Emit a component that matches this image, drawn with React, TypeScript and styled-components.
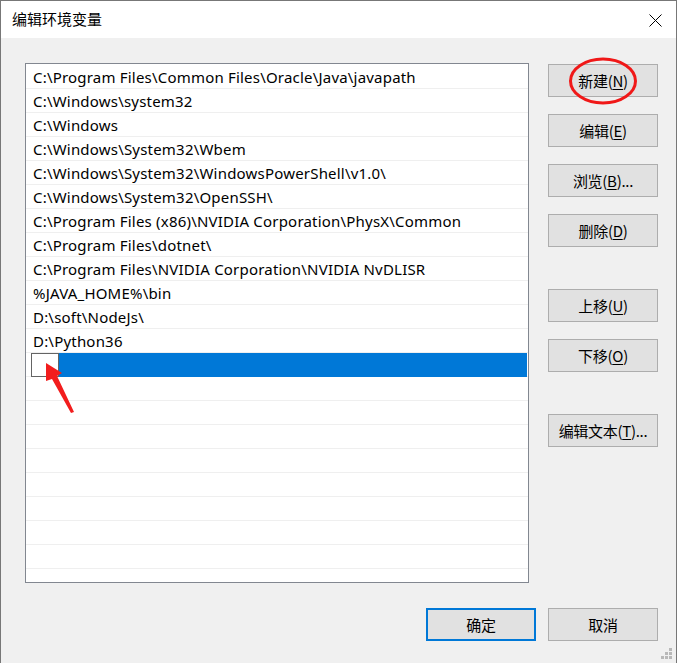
import React from "react";
import styled, { createGlobalStyle } from "styled-components";

const Global = createGlobalStyle`
  html, body { margin: 0; padding: 0; background: #ffffff; }
  body { font-family: "Noto Sans", "Noto Sans CJK SC", sans-serif; }
`;

const UI = `"Noto Sans", "Noto Sans CJK SC", sans-serif`;

const Window = styled.div`
  position: relative;
  width: 677px;
  height: 663px;
  box-sizing: border-box;
  border-left: 1px solid #777777;
  border-top: 1px solid #777777;
  border-right: 1px solid #777777;
  background: #f0f0f0;
  display: flex;
  flex-direction: column;
  overflow: hidden;
  font-family: ${UI};
  color: #000;
`;

const TitleBar = styled.div`
  height: 37px;
  background: #ffffff;
  display: flex;
  align-items: center;
  justify-content: space-between;
  padding: 0 14px 0 11px;
  flex-shrink: 0;
`;

const Title = styled.div`
  font-family: "Noto Sans CJK SC", sans-serif;
  font-size: 15px;
  line-height: 20px;
  margin-top: -1px;
`;

const CloseIcon = styled.svg`
  width: 13px;
  height: 13px;
  margin-top: 1px;
`;

const Body = styled.div`
  flex: 1;
  display: flex;
  flex-direction: column;
  padding: 25px 18px 0 24px;
`;

const Main = styled.div`
  display: flex;
  gap: 19px;
`;

const ListBox = styled.div`
  width: 504px;
  height: 520px;
  box-sizing: border-box;
  border: 1px solid #828790;
  background: #ffffff;
  padding-top: 1px;
  overflow: hidden;
`;

const Row = styled.div<{ $selected?: boolean }>`
  height: 23px;
  border-bottom: 1px solid #efefef;
  display: flex;
  align-items: center;
  padding-left: ${(p) => (p.$selected ? "5px" : "7px")};
  padding-right: 1px;
  white-space: nowrap;
`;

const RowText = styled.span`
  font-family: ${UI};
  font-size: 15px;
  letter-spacing: 0.2px;
`;

const EditBox = styled.div`
  width: 28px;
  height: 24px;
  box-sizing: border-box;
  border: 1px solid #646464;
  background: #fff;
  margin-top: 1px;
  flex-shrink: 0;
`;

const Highlight = styled.div`
  flex: 1;
  height: 24px;
  margin-top: 1px;
  background: #0078d7;
`;

const ButtonColumn = styled.div`
  display: flex;
  flex-direction: column;
  padding-top: 1px;
  width: 110px;
`;

const ButtonGroup = styled.div<{ $gapAfter?: number }>`
  display: flex;
  flex-direction: column;
  gap: 17px;
  margin-bottom: ${(p) => p.$gapAfter ?? 0}px;
`;

const Button = styled.div<{ $default?: boolean }>`
  width: 110px;
  height: 33px;
  box-sizing: border-box;
  background: #e1e1e1;
  border: ${(p) => (p.$default ? "2px solid #0078d7" : "1px solid #adadad")};
  display: flex;
  align-items: center;
  justify-content: center;
  white-space: nowrap;
`;

const Label = styled.span`
  font-family: "Noto Sans CJK SC", sans-serif;
  font-size: 15px;
  letter-spacing: -0.3px;
`;

const Key = styled.span`
  text-decoration: underline;
  text-underline-offset: 2px;
`;

const Footer = styled.div`
  display: flex;
  justify-content: flex-end;
  gap: 12px;
  margin-top: 25px;
`;

const Grip = styled.svg`
  position: absolute;
  right: 3px;
  bottom: 3px;
  width: 12px;
  height: 12px;
`;

const Annotations = styled.svg`
  position: absolute;
  left: 0;
  top: 0;
  width: 677px;
  height: 663px;
  pointer-events: none;
`;

const paths = [
  "C:\\Program Files\\Common Files\\Oracle\\Java\\javapath",
  "C:\\Windows\\system32",
  "C:\\Windows",
  "C:\\Windows\\System32\\Wbem",
  "C:\\Windows\\System32\\WindowsPowerShell\\v1.0\\",
  "C:\\Windows\\System32\\OpenSSH\\",
  "C:\\Program Files (x86)\\NVIDIA Corporation\\PhysX\\Common",
  "C:\\Program Files\\dotnet\\",
  "C:\\Program Files\\NVIDIA Corporation\\NVIDIA NvDLISR",
  "%JAVA_HOME%\\bin",
  "D:\\soft\\NodeJs\\",
  "D:\\Python36",
];

const BtnText = ({ pre, k, post = "" }: { pre: string; k: string; post?: string }) => (
  <Label>
    {pre}(<Key>{k}</Key>){post}
  </Label>
);

export default function App() {
  const empties = Array.from({ length: 9 });
  return (
    <>
      <Global />
      <Window>
        <TitleBar>
          <Title>编辑环境变量</Title>
          <CloseIcon viewBox="0 0 13 13">
            <path d="M0.5 0.5 L12.5 12.5 M12.5 0.5 L0.5 12.5" stroke="#000" strokeWidth="1" fill="none" />
          </CloseIcon>
        </TitleBar>
        <Body>
          <Main>
            <ListBox>
              {paths.map((p) => (
                <Row key={p}>
                  <RowText>{p}</RowText>
                </Row>
              ))}
              <Row $selected>
                <EditBox />
                <Highlight />
              </Row>
              {empties.map((_, i) => (
                <Row key={"e" + i} />
              ))}
            </ListBox>
            <ButtonColumn>
              <ButtonGroup $gapAfter={42}>
                <Button><BtnText pre="新建" k="N" /></Button>
                <Button><BtnText pre="编辑" k="E" /></Button>
                <Button><BtnText pre="浏览" k="B" post="..." /></Button>
                <Button><BtnText pre="删除" k="D" /></Button>
              </ButtonGroup>
              <ButtonGroup $gapAfter={42}>
                <Button><BtnText pre="上移" k="U" /></Button>
                <Button><BtnText pre="下移" k="O" /></Button>
              </ButtonGroup>
              <ButtonGroup>
                <Button><BtnText pre="编辑文本" k="T" post="..." /></Button>
              </ButtonGroup>
            </ButtonColumn>
          </Main>
          <Footer>
            <Button $default><Label>确定</Label></Button>
            <Button><Label>取消</Label></Button>
          </Footer>
        </Body>
        <Grip viewBox="0 0 12 12">
          <rect x="8" y="0" width="3" height="3" fill="#b8b8b8" />
          <rect x="4" y="4" width="3" height="3" fill="#b8b8b8" />
          <rect x="8" y="4" width="3" height="3" fill="#b8b8b8" />
          <rect x="0" y="8" width="3" height="3" fill="#b8b8b8" />
          <rect x="4" y="8" width="3" height="3" fill="#b8b8b8" />
          <rect x="8" y="8" width="3" height="3" fill="#b8b8b8" />
        </Grip>
        <Annotations viewBox="0 0 677 663">
          <ellipse cx="602" cy="80" rx="32.5" ry="22" fill="none" stroke="#f01818" strokeWidth="3" />
          <polygon points="45,362 61,372 56,375 73,411 70,412 51,378 45,380" fill="#f21d1d" />
        </Annotations>
      </Window>
    </>
  );
}
